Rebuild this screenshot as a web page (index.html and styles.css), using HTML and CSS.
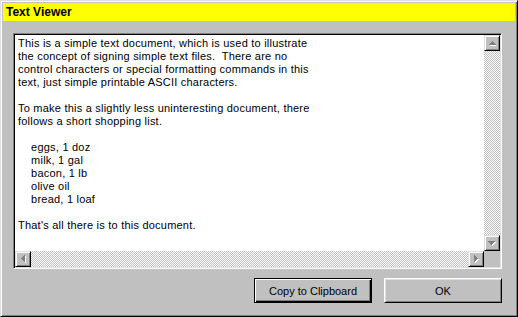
FILE: index.html
```html
<!DOCTYPE html>
<html lang="en">
<head>
    <meta charset="UTF-8">
    <title>Text Viewer</title>
    <link rel="stylesheet" href="styles.css">
</head>
<body>
    <div class="window">
        <div class="titlebar">Text Viewer</div>

        <div class="viewer">
            <div class="doc">This is a simple text document, which is used to illustrate
the concept of signing simple text files.  There are no
control characters or special formatting commands in this
text, just simple printable ASCII characters.

To make this a slightly less uninteresting document, there
follows a short shopping list.

    eggs, 1 doz
    milk, 1 gal
    bacon, 1 lb
    olive oil
    bread, 1 loaf

That's all there is to this document.</div>

            <div class="vscroll">
                <div class="sb-btn">
                    <svg width="7" height="5" viewBox="0 0 7 5"><path d="M4 1h1v1h1v1h1v1h-7z" fill="#fff" transform="translate(0 1)"/><path d="M3 0h1v1h1v1h1v1h1v1h-7v-1h1v-1h1v-1h1z" fill="#808080"/></svg>
                </div>
                <div class="track"></div>
                <div class="sb-btn">
                    <svg width="8" height="5" viewBox="0 0 8 5"><path d="M1 1h7v1h-1v1h-1v1h-1v1h-1v-1h-1v-1h-1v-1h-1z" fill="#fff"/><path d="M0 0h7v1h-1v1h-1v1h-1v1h-1v-1h-1v-1h-1v-1h-1z" fill="#808080"/></svg>
                </div>
            </div>

            <div class="hscroll">
                <div class="sb-btn">
                    <svg width="5" height="8" viewBox="0 0 5 8"><path d="M4 1v7h-1v-1h-1v-1h-1v-1h-1v-1h1v-1h1v-1h1v-1z" fill="#fff" transform="translate(1 0)"/><path d="M4 0v7h-1v-1h-1v-1h-1v-1h-1v-1h1v-1h1v-1h1v-1z" fill="#808080"/></svg>
                </div>
                <div class="track"></div>
                <div class="sb-btn">
                    <svg width="5" height="8" viewBox="0 0 5 8"><path d="M1 1h1v1h1v1h1v1h1v1h-1v1h-1v1h-1v1h-1z" fill="#fff"/><path d="M0 0h1v1h1v1h1v1h1v1h-1v1h-1v1h-1v1h-1z" fill="#808080"/></svg>
                </div>
            </div>

            <div class="corner"></div>
        </div>

        <div class="actions">
            <button class="btn btn-default">Copy to Clipboard</button>
            <button class="btn">OK</button>
        </div>
    </div>
</body>
</html>
```

FILE: styles.css
```css
* {
    margin: 0;
    padding: 0;
    box-sizing: border-box;
}

body {
    font-family: "Liberation Sans", Arial, sans-serif;
    font-size: 11px;
    color: #000;
    background: #c0c0c0;
}

.window {
    width: 518px;
    height: 317px;
    padding: 2px;
    background: #c0c0c0;
    border: 1px solid;
    border-color: #dfdfdf #000 #000 #dfdfdf;
    box-shadow: inset 1px 1px #fff, inset -1px -1px #808080;
}

.titlebar {
    height: 18px;
    line-height: 18px;
    padding-left: 3px;
    background: #ffff00;
    font-size: 12px;
    font-weight: bold;
}

.viewer {
    display: grid;
    grid-template-columns: 1fr 16px;
    grid-template-rows: 1fr 16px;
    height: 236px;
    margin: 12px 13px 0 10px;
    background: #fff;
    border: 1px solid;
    border-color: #808080 #fff #fff #808080;
    box-shadow: inset 1px 1px #000, inset -1px -1px #dfdfdf;
    padding: 1px;
}

.doc {
    padding: 2px 3px;
    line-height: 13px;
    letter-spacing: 0.22px;
    white-space: pre;
    overflow: hidden;
}

.vscroll {
    display: flex;
    flex-direction: column;
}

.hscroll {
    display: flex;
}

.track {
    flex: 1;
    background: repeating-conic-gradient(#c0c0c0 0 25%, #fff 0 50%) 0 0 / 2px 2px;
}

.sb-btn {
    display: flex;
    align-items: center;
    justify-content: center;
    width: 16px;
    height: 16px;
    background: #c0c0c0;
    border: 1px solid;
    border-color: #dfdfdf #000 #000 #dfdfdf;
    box-shadow: inset 1px 1px #fff, inset -1px -1px #808080;
}

.sb-btn svg {
    display: block;
}

.corner {
    background: #c0c0c0;
}

.actions {
    display: flex;
    justify-content: flex-end;
    gap: 12px;
    margin-top: 9px;
    padding-right: 13px;
}

.btn {
    width: 118px;
    height: 25px;
    font-family: inherit;
    font-size: 11px;
    color: #000;
    background: #c0c0c0;
    border: 1px solid;
    border-color: #fff #000 #000 #fff;
    box-shadow: inset 1px 1px #dfdfdf, inset -1px -1px #808080;
}

.btn-default {
    border-color: #000;
    box-shadow: inset 1px 1px #fff, inset -1px -1px #000, inset -2px -2px #808080;
}
```
